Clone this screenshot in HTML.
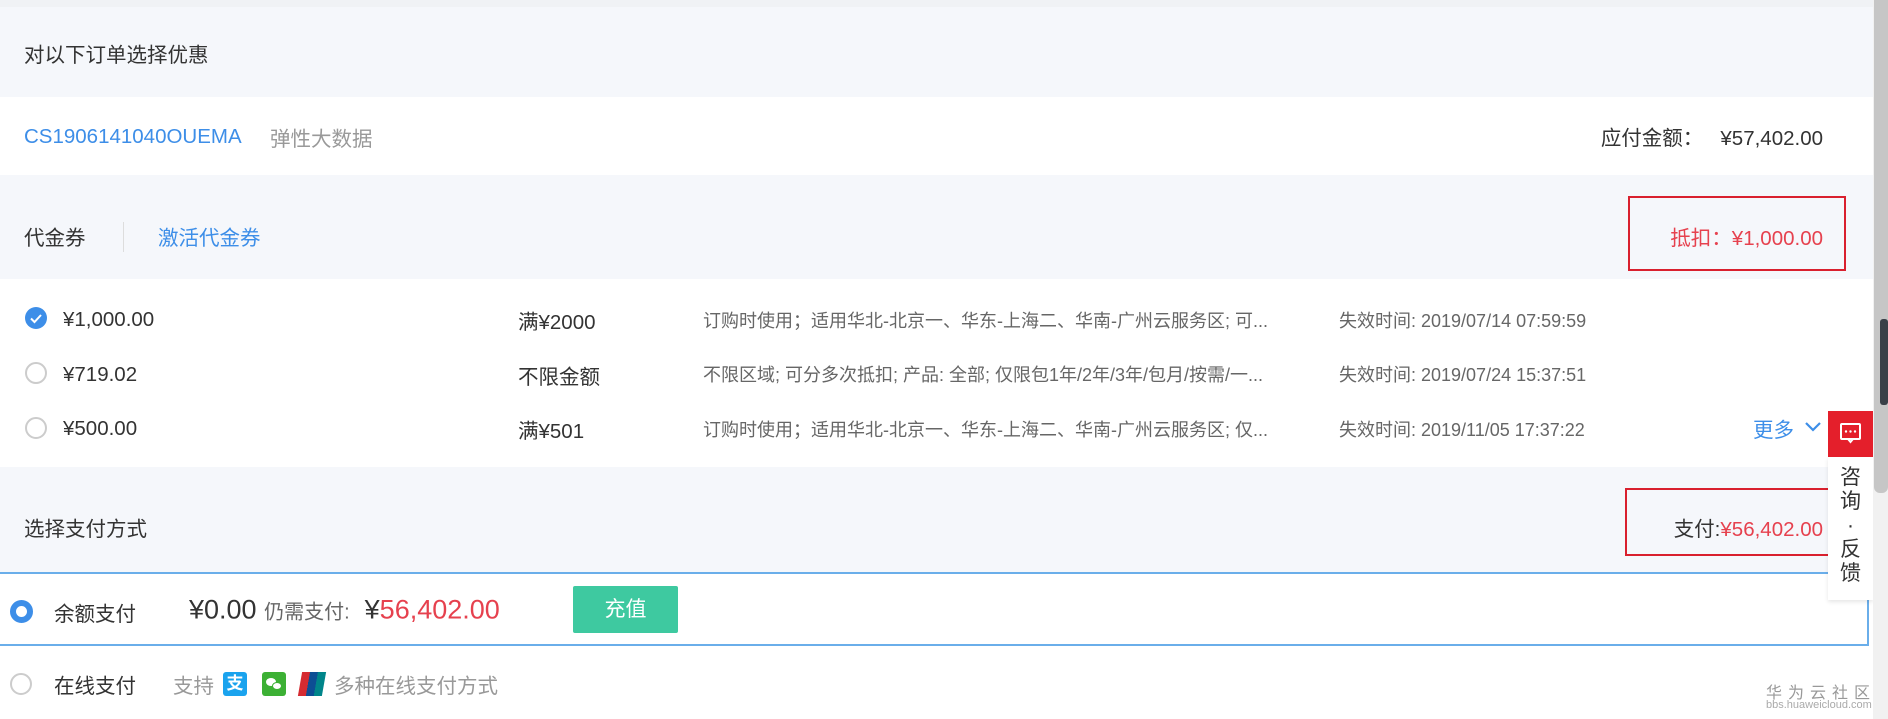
<!DOCTYPE html>
<html><head><meta charset="utf-8"><style>
*{margin:0;padding:0;box-sizing:border-box}
body{width:1888px;height:719px;overflow:hidden;background:#fff;position:relative;font-family:"Liberation Sans","Noto Sans CJK SC",sans-serif;color:#333}
.a{position:absolute;white-space:nowrap}
.band{position:absolute;left:0;width:1873px;background:#f5f7fb}
.t{transform:translateY(-50%)}
.f18{font-size:20.5px}.f16{font-size:18px}
.radio{position:absolute;width:22px;height:22px;border-radius:50%;border:2px solid #ccc;background:#fff;transform:translate(-50%,-50%)}
</style></head><body>
<div class="band" style="top:0;height:7px;background:#f0f2f5"></div>
<div class="band" style="top:7px;height:90px"></div>
<div class="a t f18" style="left:24px;top:53px">对以下订单选择优惠</div>

<div class="a t f18" style="left:24px;top:137px;color:#3d8ee8">CS1906141040OUEMA</div>
<div class="a t f18" style="left:270px;top:137px;color:#999">弹性大数据</div>
<div class="a t f18" style="right:65px;top:136px">应付金额：&nbsp;&nbsp;&nbsp;¥57,402.00</div>

<div class="band" style="top:175px;height:104px"></div>
<div class="a t f18" style="left:24px;top:236px">代金券</div>
<div class="a" style="left:123px;top:222px;width:1px;height:30px;background:#ddd"></div>
<div class="a t f18" style="left:158px;top:236px;color:#3d8ee8">激活代金券</div>
<div class="a" style="left:1628px;top:196px;width:218px;height:75px;border:2px solid #d9202e"></div>
<div class="a t f18" style="right:65px;top:236px;color:#e6414e">抵扣：¥1,000.00</div>

<div class="a" style="left:25px;top:307px;width:22px;height:22px;border-radius:50%;background:#3d8ee8"><svg width="22" height="22"><path d="M6 11.5l3.5 3.5 6.5-7" stroke="#fff" stroke-width="2" fill="none"/></svg></div>
<div class="radio" style="left:36px;top:373px"></div>
<div class="radio" style="left:36px;top:428px"></div>
<div class="a t f18" style="left:63px;top:320px">¥1,000.00</div>
<div class="a t f18" style="left:63px;top:375px">¥719.02</div>
<div class="a t f18" style="left:63px;top:429px">¥500.00</div>
<div class="a t f18" style="left:518px;top:320px">满¥2000</div>
<div class="a t f18" style="left:518px;top:375px">不限金额</div>
<div class="a t f18" style="left:518px;top:429px">满¥501</div>
<div class="a t f16" style="left:703px;top:320px;color:#666">订购时使用；适用华北-北京一、华东-上海二、华南-广州云服务区; 可...</div>
<div class="a t f16" style="left:703px;top:374px;color:#666">不限区域; 可分多次抵扣; 产品: 全部; 仅限包1年/2年/3年/包月/按需/一...</div>
<div class="a t f16" style="left:703px;top:429px;color:#666">订购时使用；适用华北-北京一、华东-上海二、华南-广州云服务区; 仅...</div>
<div class="a t f16" style="left:1339px;top:320px;color:#666">失效时间: 2019/07/14 07:59:59</div>
<div class="a t f16" style="left:1339px;top:374px;color:#666">失效时间: 2019/07/24 15:37:51</div>
<div class="a t f16" style="left:1339px;top:429px;color:#666">失效时间: 2019/11/05 17:37:22</div>
<div class="a t f18" style="left:1753px;top:428px;color:#3d8ee8">更多</div>
<svg class="a" style="left:1804px;top:420px" width="18" height="14"><path d="M2 3l7 7 7-7" stroke="#3d8ee8" stroke-width="2.2" fill="none"/></svg>

<div class="band" style="top:467px;height:105px"></div>
<div class="a t f18" style="left:24px;top:527px">选择支付方式</div>
<div class="a" style="left:1625px;top:488px;width:220px;height:68px;border:2px solid #d9202e"></div>
<div class="a t f18" style="right:65px;top:527px">支付:<span style="color:#e6414e">¥56,402.00</span></div>

<div class="a" style="left:0;top:572px;width:1869px;height:74px;border:2px solid #6aaeea;border-left:none"></div>
<div class="a" style="left:10px;top:600px;width:23px;height:23px;border-radius:50%;border:6px solid #3d8ee8;background:#fff"></div>
<div class="a t f18" style="left:54px;top:612px">余额支付</div>
<div class="a t" style="left:189px;top:610px;font-size:27px">¥0.00 <span style="font-size:20px;color:#666">仍需支付:</span>&nbsp;&nbsp;¥<span style="color:#e6414e">56,402.00</span></div>
<div class="a" style="left:573px;top:586px;width:105px;height:47px;background:#3ec9a0;border-radius:2px;color:#fff;font-size:21px;text-align:center;line-height:47px">充值</div>

<div class="radio" style="left:21px;top:684px"></div>
<div class="a t f18" style="left:54px;top:684px">在线支付</div>
<div class="a t f18" style="left:173px;top:684px;color:#999">支持</div>
<div class="a" style="left:223px;top:672px;width:24px;height:24px;background:#1aa3ee;border-radius:3px;color:#fff;font-size:17px;text-align:center;line-height:24px;font-weight:bold">支</div>
<div class="a" style="left:262px;top:672px;width:24px;height:24px;background:#3cb034;border-radius:3px"><div style="position:absolute;left:4px;top:6px;width:10px;height:8px;border-radius:50%;background:#fff"></div><div style="position:absolute;left:10px;top:10px;width:10px;height:8px;border-radius:50%;background:#fff;border:1px solid #3cb034"></div></div>
<div class="a" style="left:300px;top:672px;width:24px;height:24px;transform:skewX(-10deg);background:linear-gradient(90deg,#d52b31 0 33%,#0d4e94 33% 66%,#00858a 66%)"></div>
<div class="a t f18" style="left:334px;top:684px;color:#999">多种在线支付方式</div>

<div class="a" style="left:1828px;top:411px;width:45px;height:46px;background:#e41f2b"><svg width="45" height="46"><rect x="13" y="13" width="19" height="15" rx="1" stroke="#fff" stroke-width="2" fill="none"/><path d="M20 28l2.5 3 2.5-3" stroke="#fff" stroke-width="2" fill="none"/><circle cx="18" cy="20.5" r="1.2" fill="#fff"/><circle cx="22.5" cy="20.5" r="1.2" fill="#fff"/><circle cx="27" cy="20.5" r="1.2" fill="#fff"/></svg></div>
<div class="a" style="left:1828px;top:457px;width:45px;height:143px;background:#fff;box-shadow:0 2px 4px rgba(0,0,0,.1);font-size:21px;line-height:24px;text-align:center;padding-top:9px;white-space:normal">咨<br>询<br>·<br>反<br>馈</div>

<div class="a" style="left:1873px;top:0;width:15px;height:719px;background:#f1f1f1"></div>
<div class="a" style="left:1874px;top:0;width:14px;height:493px;background:#c6c6c6;border-radius:0 0 6px 6px"></div>
<div class="a" style="left:1880px;top:319px;width:8px;height:86px;background:#3a4048;border-radius:3px"></div>

<div class="a" style="left:1766px;top:679px;font-size:16px;color:#999;letter-spacing:6px">华为云社区</div>
<div class="a" style="left:1766px;top:699px;font-size:11px;color:#aaa">bbs.huaweicloud.com</div>
</body></html>
